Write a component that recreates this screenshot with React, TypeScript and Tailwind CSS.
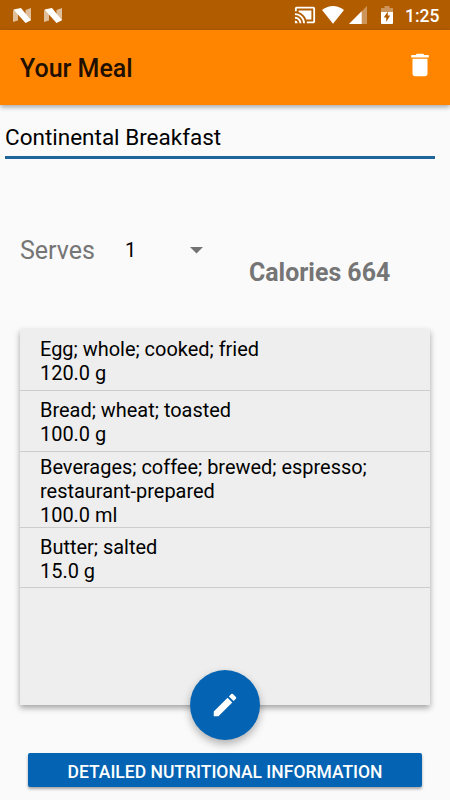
import { MdCastConnected, MdDelete, MdEdit } from 'react-icons/md'

const foods = [
  { name: 'Egg; whole; cooked; fried', amount: '120.0 g', height: 'h-[61.5px]' },
  { name: 'Bread; wheat; toasted', amount: '100.0 g', height: 'h-[61.25px]' },
  {
    name: 'Beverages; coffee; brewed; espresso; restaurant-prepared',
    amount: '100.0 ml',
    height: 'h-[76px]',
  },
  { name: 'Butter; salted', amount: '15.0 g', height: 'h-[60.5px]' },
]

function NougatIcon() {
  return (
    <svg width="18" height="15" viewBox="0 0 18 15">
      <path d="M0 2.500 5 1v11.500L0 14z" fill="#fff" opacity=".6" />
      <path d="M12.500 2 18 0v12l-5.500 2z" fill="#fff" opacity=".6" />
      <path d="M0.500 1.600 8 0l10 12.300-5.500 2.600z" fill="#fff" />
    </svg>
  )
}

function StatusBar() {
  return (
    <div className="flex h-[30px] items-center bg-[#b25c00] text-white">
      <div className="ml-[13px] flex gap-[13px]">
        <NougatIcon />
        <NougatIcon />
      </div>
      <div className="ml-auto flex items-center">
        <MdCastConnected size={22} />
        {/* Wifi */}
        <svg className="ml-[6px]" width="22" height="18" viewBox="0 0 22 18">
          <path d="M0 4Q11-4 22 4L11 17.700z" fill="#fff" />
        </svg>
        {/* Signal */}
        <svg className="ml-[5px]" width="18" height="18" viewBox="0 0 18 18">
          <path d="M0 18 18 0v18z" fill="#fff" opacity=".35" />
          <path d="M0 18 12.700 5.300V18z" fill="#fff" />
        </svg>
        {/* Battery */}
        <svg className="ml-[14px]" width="12" height="18" viewBox="0 0 12 18">
          <path d="M3.500 0h5v2H12v4H0V2h3.500z" fill="#fff" opacity=".35" />
          <path d="M0 6h12v11q0 1-1 1H1q-1 0-1-1z" fill="#fff" />
          <path d="M6.800 5.500 2.700 11.500h2.500v4.500l4-6.500H6.800z" fill="#b25c00" />
        </svg>
        <span className="w-[57px] pt-[2px] pl-[12px] text-[17.5px] leading-[28px] font-medium">1:25</span>
      </div>
    </div>
  )
}

export default function App() {
  return (
    <div className="h-[800px] w-[450px] overflow-hidden bg-[#fafafa] font-[Roboto,sans-serif] text-black">
      <StatusBar />

      {/* App bar */}
      <header className="flex h-[75px] items-center justify-between bg-[#ff8400] pr-[15px] pl-5 shadow-[0_2px_5px_rgba(0,0,0,0.35)]">
        <h1 className="pt-[2px] text-[25px] font-medium text-[#210f00]">Your Meal</h1>
        <button className="mb-[5px] text-white">
          <MdDelete size={30} />
        </button>
      </header>

      {/* Meal name */}
      <div className="mr-[15px] ml-[5px] flex h-[54px] items-end border-b-[3px] border-[#1d659b]">
        <p className="pb-[5px] text-[22.5px] leading-[28px]">Continental Breakfast</p>
      </div>

      <div className="flex h-[170px] pl-5">
        <div className="mt-[77px] flex h-[28px] w-[229px] items-center">
          <span className="w-[105px] pt-[2px] text-[25px] text-[#757575]">Serves</span>
          <span className="w-[65px] pb-px text-[20px]">1</span>
          <svg width="13" height="7" viewBox="0 0 13 7">
            <path d="M0 0h13L6.500 6.500z" fill="#737373" />
          </svg>
        </div>
        <p className="mt-[99px] text-[24.9px] leading-[30px] font-bold text-[#757575]">Calories 664</p>
      </div>

      {/* Foods in the meal */}
      <div className="relative mx-5 h-[376px] bg-[#eee] shadow-[0_3px_6px_rgba(0,0,0,0.35)]">
        <ul>
          {foods.map((food) => (
            <li
              key={food.name}
              className={`flex flex-col justify-center border-b border-[#cdcdcd] px-5 pt-[5px] text-[19.95px] leading-[23.75px] ${food.height}`}
            >
              <p>{food.name}</p>
              <p>{food.amount}</p>
            </li>
          ))}
        </ul>
        <button className="absolute -bottom-[35px] left-[170px] flex size-[70px] items-center justify-center rounded-full bg-[#0464b3] text-white shadow-[0_4px_9px_rgba(0,0,0,0.3)]">
          <MdEdit size={30} />
        </button>
      </div>

      <button className="mt-[48px] ml-[28px] flex h-[34px] w-[394px] items-center justify-center rounded-[2px] bg-[#0464b3] pt-[5px] text-[17.5px] font-medium text-white shadow-[0_2px_3px_rgba(0,0,0,0.35)]">
        DETAILED NUTRITIONAL INFORMATION
      </button>
    </div>
  )
}
